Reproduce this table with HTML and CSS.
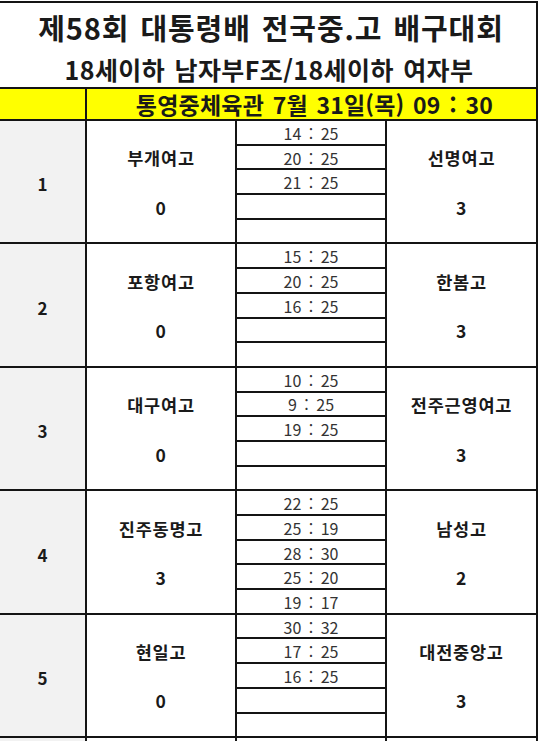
FILE: index.html
```html
<!DOCTYPE html>
<html lang="ko">
<head>
<meta charset="utf-8">
<title>제58회 대통령배 전국중.고 배구대회</title>
<link rel="stylesheet" href="styles.css">
</head>
<body>
<div class="sheet">
  <div class="header">
    <div class="title">제58회 대통령배 전국중.고 배구대회</div>
    <div class="subtitle">18세이하 남자부F조/18세이하 여자부</div>
  </div>
  <div class="ybar-side"></div>
  <div class="ybar">통영중체육관 7월 31일(목) 09 : 30</div>

  <div class="no">1</div>
  <div class="team"><span class="name">부개여고</span><span class="pts">0</span></div>
  <div class="set">14 : 25</div>
  <div class="team right"><span class="name">선명여고</span><span class="pts">3</span></div>
  <div class="set">20 : 25</div>
  <div class="set">21 : 25</div>
  <div class="set"></div>
  <div class="set"></div>

  <div class="no">2</div>
  <div class="team"><span class="name">포항여고</span><span class="pts">0</span></div>
  <div class="set">15 : 25</div>
  <div class="team right"><span class="name">한봄고</span><span class="pts">3</span></div>
  <div class="set">20 : 25</div>
  <div class="set">16 : 25</div>
  <div class="set"></div>
  <div class="set"></div>

  <div class="no">3</div>
  <div class="team"><span class="name">대구여고</span><span class="pts">0</span></div>
  <div class="set">10 : 25</div>
  <div class="team right"><span class="name">전주근영여고</span><span class="pts">3</span></div>
  <div class="set">9 : 25</div>
  <div class="set">19 : 25</div>
  <div class="set"></div>
  <div class="set"></div>

  <div class="no">4</div>
  <div class="team"><span class="name">진주동명고</span><span class="pts">3</span></div>
  <div class="set">22 : 25</div>
  <div class="team right"><span class="name">남성고</span><span class="pts">2</span></div>
  <div class="set">25 : 19</div>
  <div class="set">28 : 30</div>
  <div class="set">25 : 20</div>
  <div class="set">19 : 17</div>

  <div class="no">5</div>
  <div class="team"><span class="name">현일고</span><span class="pts">0</span></div>
  <div class="set">30 : 32</div>
  <div class="team right"><span class="name">대전중앙고</span><span class="pts">3</span></div>
  <div class="set">17 : 25</div>
  <div class="set">16 : 25</div>
  <div class="set"></div>
  <div class="set"></div>

  <div class="no"></div>
  <div class="team"></div>
  <div class="set"></div>
  <div class="team right"></div>
  <div class="set"></div>
  <div class="set"></div>
  <div class="set"></div>
  <div class="set"></div>
</div>
</body>
</html>
```

FILE: styles.css
```css
html, body {
  margin: 0;
  padding: 0;
  background: #ffffff;
}
body {
  height: 741px;
  overflow: hidden;
  padding-top: 1px;
  font-family: "Noto Sans CJK KR", "Noto Sans", sans-serif;
  color: #1a1a1a;
}
.sheet {
  width: 536px;
  background: #141414;
  display: grid;
  grid-template-columns: 85px 148px 148px 149px;
  grid-template-rows: 84px 30px;
  grid-auto-rows: 22.7px;
  column-gap: 2px;
  row-gap: 2px;
  padding: 2px 2px 0 0;
}
.header {
  grid-column: 1 / 5;
  background: #ffffff;
  display: flex;
  flex-direction: column;
  align-items: center;
}
.title {
  height: 46px;
  display: flex;
  align-items: center;
  font-size: 29px;
  font-weight: 700;
  line-height: 1;
  padding-top: 1px;
  letter-spacing: 0.9px;
  word-spacing: 2px;
  padding-left: 6px;
}
.subtitle {
  height: 36px;
  display: flex;
  align-items: center;
  font-size: 25px;
  font-weight: 700;
  line-height: 1;
  padding-top: 1px;
  letter-spacing: 0.4px;
  word-spacing: 2px;
  padding-left: 2px;
}
.ybar-side {
  background: #ffff00;
}
.ybar {
  grid-column: 2 / 5;
  background: #ffff00;
  display: flex;
  align-items: center;
  justify-content: center;
  font-size: 23px;
  font-weight: 700;
  line-height: 1;
  letter-spacing: 0.2px;
  word-spacing: 2px;
  padding-left: 6px;
}
.no {
  grid-column: 1;
  grid-row: span 5;
  background: #f2f2f2;
  display: flex;
  align-items: center;
  justify-content: center;
  font-size: 17px;
  font-weight: 700;
  padding-top: 4px;
}
.team {
  grid-column: 2;
  grid-row: span 5;
  background: #ffffff;
  display: grid;
  grid-template-rows: repeat(5, 1fr);
  row-gap: 2px;
  justify-items: center;
  align-items: center;
  font-size: 17.5px;
  font-weight: 700;
  letter-spacing: 0.8px;
  line-height: 1;
}
.team.right {
  grid-column: 4;
}
.team .name {
  grid-row: 2;
  padding-top: 2px;
}
.team .pts {
  grid-row: 4;
  padding-top: 2px;
}
.set {
  grid-column: 3;
  background: #ffffff;
  display: flex;
  align-items: center;
  justify-content: center;
  font-size: 16px;
  font-weight: 400;
  color: #333333;
  line-height: 1;
  word-spacing: 3px;
  padding-top: 1px;
}
```
